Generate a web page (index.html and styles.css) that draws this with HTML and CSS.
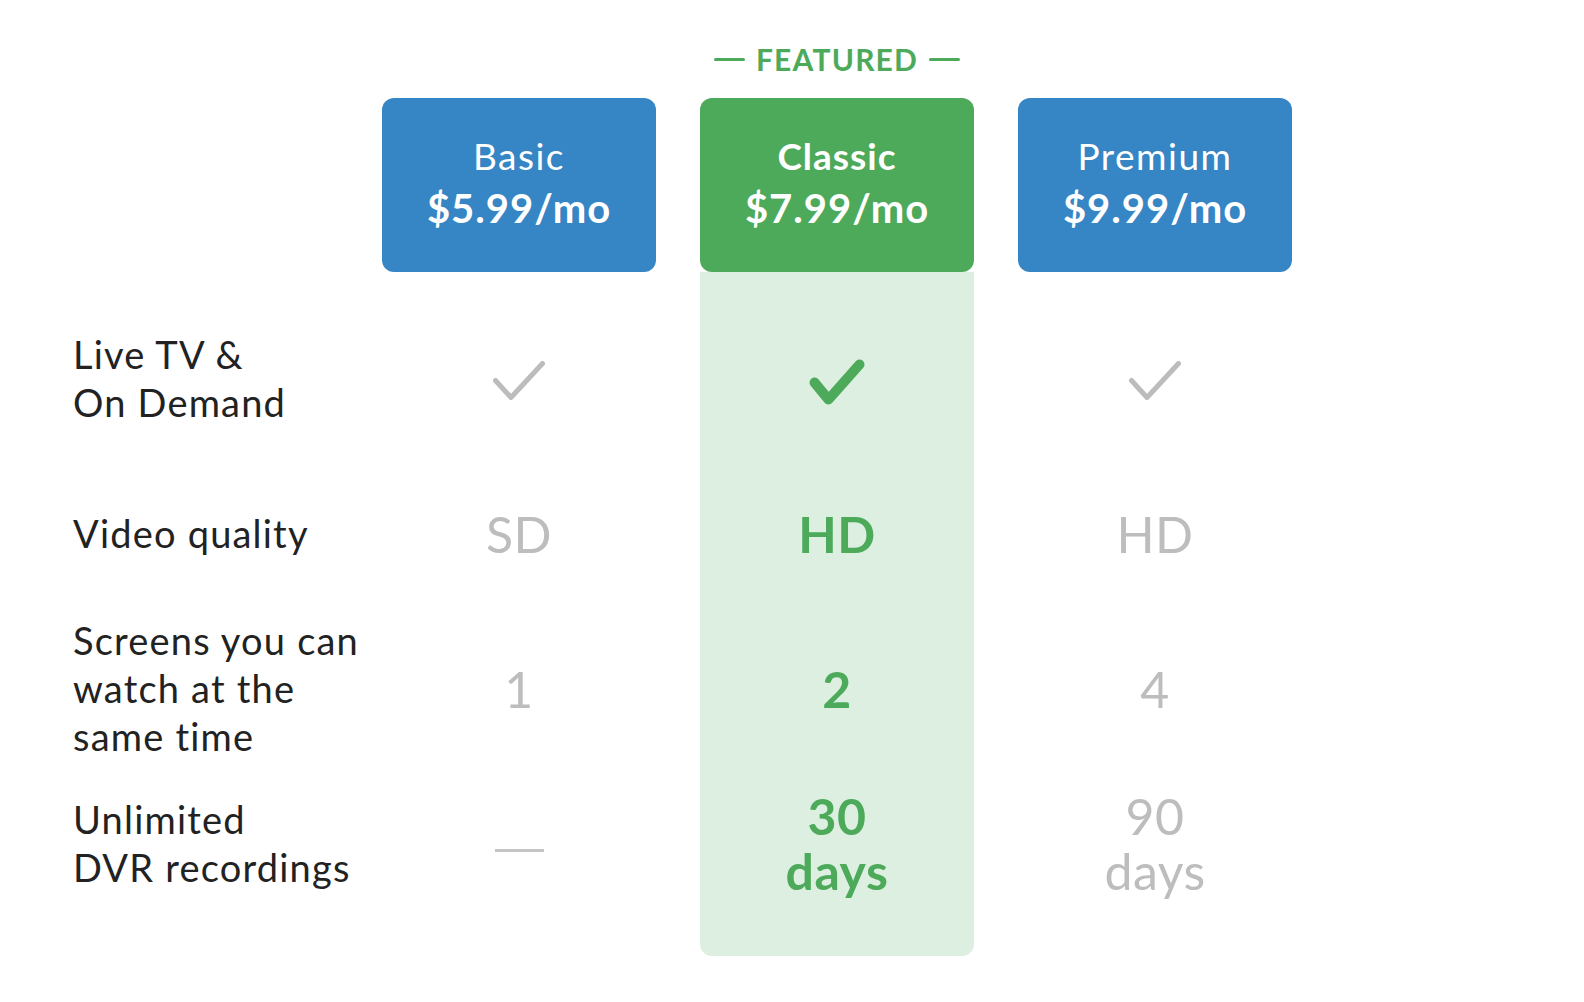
FILE: index.html
```html
<!DOCTYPE html>
<html lang="en">
<head>
<meta charset="utf-8">
<title>Plans</title>
<link rel="stylesheet" href="styles.css">
</head>
<body>
<main class="compare">
  <div class="tag col-classic"><span class="tag-dash"></span><span class="tag-text">FEATURED</span><span class="tag-dash"></span></div>

  <div class="plan plan-blue col-basic"><span class="plan-name">Basic</span><span class="plan-price">$5.99/mo</span></div>
  <div class="plan plan-green col-classic"><span class="plan-name plan-name-bold">Classic</span><span class="plan-price">$7.99/mo</span></div>
  <div class="plan plan-blue col-premium"><span class="plan-name">Premium</span><span class="plan-price">$9.99/mo</span></div>

  <div class="featured-bg col-classic"></div>

  <div class="feature row-1">
    <div class="label">Live TV &amp;<br>On Demand</div>
    <div class="cell col-basic"><svg class="check check-gray" width="60" height="50" viewBox="0 0 60 50"><polyline points="6.5,23.5 22,40.5 53.5,6.5"/></svg></div>
    <div class="cell col-classic"><svg class="check check-green" width="60" height="50" viewBox="0 0 60 50"><polyline points="7.5,25.5 21.5,42.5 52.5,7.5"/></svg></div>
    <div class="cell col-premium"><svg class="check check-gray" width="60" height="50" viewBox="0 0 60 50"><polyline points="6.5,23.5 22,40.5 53.5,6.5"/></svg></div>
  </div>

  <div class="feature row-2">
    <div class="label">Video quality</div>
    <div class="cell col-basic"><span class="value">SD</span></div>
    <div class="cell col-classic"><span class="value value-featured">HD</span></div>
    <div class="cell col-premium"><span class="value">HD</span></div>
  </div>

  <div class="feature row-3">
    <div class="label">Screens you can<br>watch at the<br>same time</div>
    <div class="cell col-basic"><span class="value">1</span></div>
    <div class="cell col-classic"><span class="value value-featured">2</span></div>
    <div class="cell col-premium"><span class="value">4</span></div>
  </div>

  <div class="feature row-4">
    <div class="label">Unlimited<br>DVR recordings</div>
    <div class="cell col-basic"><span class="dash"></span></div>
    <div class="cell col-classic"><span class="value value-featured">30<br>days</span></div>
    <div class="cell col-premium"><span class="value">90<br>days</span></div>
  </div>
</main>
</body>
</html>
```

FILE: styles.css
```css
html, body {
  margin: 0;
  padding: 0;
  background: #ffffff;
}

body {
  font-family: Lato, "Noto Sans", "Liberation Sans", sans-serif;
  color: #222222;
}

.compare {
  display: grid;
  grid-template-columns: 265px 274px 274px 274px;
  grid-template-rows: 98px 174px 32px 155px 155px 155px 155px 32px;
  column-gap: 44px;
  padding-left: 73px;
}

.col-basic { grid-column: 2; }
.col-classic { grid-column: 3; }
.col-premium { grid-column: 4; }

.tag {
  grid-row: 1;
  display: flex;
  align-items: center;
  justify-content: center;
  gap: 11px;
  padding-top: 20px;
  color: #4caa5a;
  white-space: nowrap;
}

.tag-text {
  font-size: 30px;
  line-height: 36px;
  font-weight: 700;
  letter-spacing: 1.2px;
}

.tag-dash {
  display: block;
  width: 31px;
  height: 3px;
  border-radius: 2px;
  background: #4caa5a;
}

.plan {
  grid-row: 2;
  border-radius: 12px;
  color: #ffffff;
  display: flex;
  flex-direction: column;
  align-items: center;
  justify-content: center;
  padding-bottom: 6px;
  box-sizing: border-box;
}

.plan-blue { background: #3685c5; }
.plan-green { background: #4caa5a; }

.plan-name {
  font-size: 37px;
  line-height: 53px;
  font-weight: 400;
  letter-spacing: 1.5px;
}

.plan-name-bold { font-weight: 700; letter-spacing: 1px; }

.plan-price {
  font-size: 40px;
  line-height: 53px;
  font-weight: 700;
  letter-spacing: 1px;
}

.featured-bg {
  grid-row: 3 / 9;
  background: #ddefe0;
  border-radius: 0 0 12px 12px;
}

.feature { display: contents; }
.row-1 > * { grid-row: 4; }
.row-2 > * { grid-row: 5; }
.row-3 > * { grid-row: 6; }
.row-4 > * { grid-row: 7; }

.label {
  grid-column: 1;
  align-self: center;
  padding-bottom: 8px;
  font-size: 38px;
  line-height: 48px;
  letter-spacing: 1.2px;
  white-space: nowrap;
  color: #222222;
}

.cell {
  display: flex;
  align-items: center;
  justify-content: center;
  text-align: center;
}

.value {
  padding-bottom: 5px;
  font-size: 50px;
  line-height: 55px;
  font-weight: 400;
  letter-spacing: 0.5px;
  color: #bdbdbd;
}

.value-featured {
  font-weight: 700;
  color: #4caa5a;
}

.check polyline {
  fill: none;
  stroke-linecap: round;
  stroke-linejoin: round;
}

.check-green polyline {
  stroke: #4caa5a;
  stroke-width: 10;
}

.check-gray polyline {
  stroke: #bcbcbc;
  stroke-width: 5;
}

.check-gray {
  filter: blur(0.6px);
}

.dash {
  display: block;
  width: 49px;
  height: 3px;
  margin-top: 8px;
  background: #c4c4c4;
}
```
